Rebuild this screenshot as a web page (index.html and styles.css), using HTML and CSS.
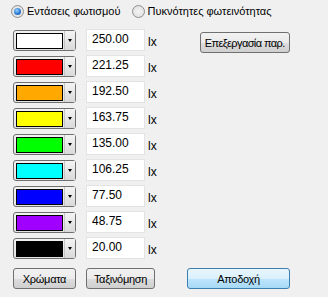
FILE: index.html
```html
<!DOCTYPE html>
<html lang="el">
<head>
<meta charset="UTF-8" />
<title>Εντάσεις φωτισμού</title>
<link rel="stylesheet" href="styles.css">
</head>
<body>

<div class="radios">
  <label class="radio checked"><span class="dot"></span>Εντάσεις φωτισμού</label>
  <label class="radio"><span class="dot"></span>Πυκνότητες φωτεινότητας</label>
</div>

<div class="main">
  <div class="rows">
    <div class="row">
      <div class="combo"><span class="swatch" style="background:#ffffff"></span><span class="drop"></span></div>
      <div class="field">250.00</div><span class="unit">lx</span>
    </div>
    <div class="row">
      <div class="combo"><span class="swatch" style="background:#ff0000"></span><span class="drop"></span></div>
      <div class="field">221.25</div><span class="unit">lx</span>
    </div>
    <div class="row">
      <div class="combo"><span class="swatch" style="background:#ffa800"></span><span class="drop"></span></div>
      <div class="field">192.50</div><span class="unit">lx</span>
    </div>
    <div class="row">
      <div class="combo"><span class="swatch" style="background:#ffff00"></span><span class="drop"></span></div>
      <div class="field">163.75</div><span class="unit">lx</span>
    </div>
    <div class="row">
      <div class="combo"><span class="swatch" style="background:#00ff00"></span><span class="drop"></span></div>
      <div class="field">135.00</div><span class="unit">lx</span>
    </div>
    <div class="row">
      <div class="combo"><span class="swatch" style="background:#00ffff"></span><span class="drop"></span></div>
      <div class="field">106.25</div><span class="unit">lx</span>
    </div>
    <div class="row">
      <div class="combo"><span class="swatch" style="background:#0000ff"></span><span class="drop"></span></div>
      <div class="field">77.50</div><span class="unit">lx</span>
    </div>
    <div class="row">
      <div class="combo"><span class="swatch" style="background:#a000ff"></span><span class="drop"></span></div>
      <div class="field">48.75</div><span class="unit">lx</span>
    </div>
    <div class="row">
      <div class="combo"><span class="swatch" style="background:#000000"></span><span class="drop"></span></div>
      <div class="field">20.00</div><span class="unit">lx</span>
    </div>
  </div>
  <div class="side">
    <button class="btn edit">Επεξεργασία παρ.</button>
  </div>
</div>

<div class="buttons">
  <button class="btn colors">Χρώματα</button>
  <button class="btn sort">Ταξινόμηση</button>
  <button class="btn ok">Αποδοχή</button>
</div>

</body>
</html>
```

FILE: styles.css
```css
body {
  margin: 0;
  background: #f0f0f0;
  font-family: "Liberation Sans", Arial, sans-serif;
  font-size: 11px;
  color: #000;
  width: 328px;
  height: 297px;
  overflow: hidden;
}
.radios {
  display: flex;
  padding: 4px 0 0 11px;
  height: 14px;
  font-size: 11px;
}
.radio {
  display: flex;
  align-items: center;
  line-height: 14px;
  white-space: nowrap;
}
.radio + .radio {
  margin-left: 11px;
}
.dot {
  width: 11px;
  height: 11px;
  border: 1px solid #8e8f8f;
  border-radius: 50%;
  background: radial-gradient(circle, #f4f4f4 0, #dcdcdc 100%);
  margin-right: 3px;
  position: relative;
}
.radio.checked .dot::after {
  content: "";
  position: absolute;
  left: 2px;
  top: 2px;
  width: 7px;
  height: 7px;
  border-radius: 50%;
  background: radial-gradient(circle at 40% 35%, #9ad1ff 0, #2a7bd6 55%, #14458a 100%);
}
.main {
  display: flex;
  padding: 11px 0 0 13px;
}
.rows {
  display: flex;
  flex-direction: column;
}
.row {
  display: flex;
  align-items: center;
  height: 22px;
  margin-bottom: 4px;
}
.combo {
  display: flex;
  width: 61px;
  height: 19px;
  border: 1px solid #707070;
  border-radius: 3px;
  background: linear-gradient(#f2f2f2, #e3e3e3);
}
.swatch {
  width: 46px;
  height: 14px;
  margin: 2px 0 0 2px;
  border: 1px solid #000;
}
.drop {
  width: 10px;
  margin-left: 1px;
  border-left: 1px solid #c5c5c5;
  background: linear-gradient(#f4f4f4, #d9d9d9);
  position: relative;
}
.drop::after {
  content: "";
  position: absolute;
  left: 3px;
  top: 8px;
  border-left: 2.5px solid transparent;
  border-right: 2.5px solid transparent;
  border-top: 3px solid #000;
}
.field {
  width: 52px;
  height: 20px;
  margin-left: 10px;
  padding-left: 5px;
  background: #fff;
  border: 1px solid #e3e3e3;
  line-height: 18px;
  font-size: 12px;
}
.unit {
  margin-left: 3px;
  padding-top: 4px;
  font-size: 12px;
}
.side {
  padding: 3px 0 0 43px;
}
.btn {
  font-family: inherit;
  font-size: 11px;
  letter-spacing: -0.3px;
  height: 21px;
  padding: 0;
  white-space: nowrap;
  border: 1px solid #707070;
  border-radius: 3px;
  background: linear-gradient(#f2f2f2 0, #ebebeb 50%, #dddddd 51%, #cfcfcf 100%);
  color: #000;
}
.edit {
  width: 90px;
  letter-spacing: -0.6px;
}
.buttons {
  display: flex;
  padding: 5px 0 0 13px;
}
.colors {
  width: 63px;
}
.sort {
  width: 69px;
  margin-left: 10px;
}
.ok {
  width: 103px;
  margin-left: 32px;
  border-color: #3c7fb1;
  background: linear-gradient(#eaf6fd 0, #d9f0fc 50%, #bee6fd 51%, #a7d9f5 100%);
}
```
